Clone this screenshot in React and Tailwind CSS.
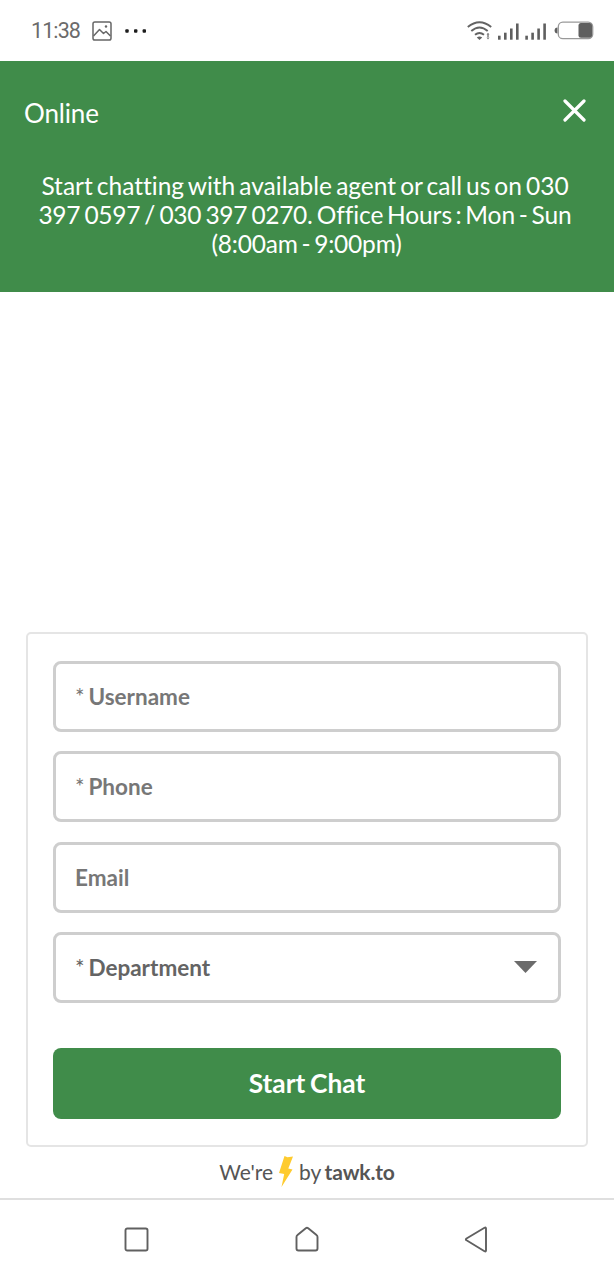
import React from "react";

function StatusBar() {
  return (
    <div className="flex h-[61px] items-center bg-white pl-[31px] pr-[20px]">
      <span className="w-[50px] pt-[1px] font-['Roboto',sans-serif] text-[21.500px] leading-none tracking-[-0.900px] text-[#6b6b6b]">11:38</span>
      <svg className="ml-[11px]" width="20" height="20" viewBox="0 0 20 20" fill="none" stroke="#666" strokeWidth="1.5">
        <rect x="1" y="1" width="18" height="18" rx="1.8" />
        <path d="M1.5 15 7.5 8.5 11.5 12.5 14 10.500 18.500 15" strokeLinejoin="round" />
        <circle cx="14" cy="5.500" r="1.200" fill="#666" stroke="none" />
      </svg>
      <svg className="ml-[13px]" width="22" height="4" viewBox="0 0 22 4" fill="#1c1c1c">
        <rect x="0.300" y="0.300" width="3.400" height="3.400" rx="0.900" />
        <rect x="9" y="0.300" width="3.400" height="3.400" rx="0.900" />
        <rect x="17.600" y="0.300" width="3.400" height="3.400" rx="0.900" />
      </svg>
      <svg className="ml-auto" width="127" height="22" viewBox="0 0 127 22" fill="none">
        <g stroke="#636363" strokeWidth="1.900">
          <path d="M.8 7Q12.500-2.500 24.200 7" />
          <path d="M4.300 11Q12.500 3.800 20.700 11" />
          <path d="M8 14.800Q12.500 11 17 14.800" />
        </g>
        <path d="M9.800 17.500Q12.500 15.500 15.200 17.500L12.500 20Z" fill="#636363" />
        <path d="M19.500 14.500 21 12.800 22.500 14.500ZM20.300 14.500H21.700V17H20.300ZM19.500 17.500H22.500L21 19.500Z" fill="#777" />
        <g fill="#5f5f5f">
          <rect x="31" y="15.700" width="2.600" height="4" />
          <rect x="37" y="12.700" width="2.600" height="7" />
          <rect x="43" y="8.500" width="2.600" height="11.200" />
          <rect x="49" y="3.500" width="2.600" height="16.200" />
          <rect x="58.300" y="15.700" width="2.600" height="4" />
          <rect x="64.300" y="12.700" width="2.600" height="7" />
          <rect x="70.300" y="8.500" width="2.600" height="11.200" />
          <rect x="76.300" y="3.500" width="2.600" height="16.200" />
          <path d="M90.500 7.500V13.500Q87.600 13.500 87.600 10.500T90.500 7.500Z" />
        </g>
        <rect x="91.300" y="2.200" width="34.400" height="16.500" rx="4.500" stroke="#999" strokeWidth="1.300" />
        <rect x="111.500" y="3" width="13.500" height="14.800" rx="2.500" fill="#5f5f5f" />
      </svg>
    </div>
  );
}

function Field({ label, required, select }) {
  return (
    <div
      className={
        "flex h-[71px] items-center rounded-[8px] border-[3px] border-[#cecece] pl-[19px] pr-[21px] text-[22.500px] leading-none font-bold " +
        (select ? "text-[#646464]" : "text-[#777777]")
      }
    >
      <span className="pt-[2px] [word-spacing:-1.900px]">
        {required && <span className="font-normal">* </span>}
        {label}
      </span>
      {select && (
        <svg className="-mt-[1px] ml-auto" width="23" height="12" viewBox="0 0 23 12" fill="#6b6b6b">
          <path d="M0 0H23L11.500 12Z" />
        </svg>
      )}
    </div>
  );
}

export default function App() {
  return (
    <div className="flex h-[1280px] w-[614px] flex-col overflow-hidden bg-white font-['Lato',sans-serif] [font-variant-ligatures:no-common-ligatures]">
      <StatusBar />
      <header className="h-[231px] bg-[#408c4a] text-white">
        <div className="flex h-[101px] items-center justify-between pl-[24px] pr-[28px]">
          <h1 className="pt-[2px] text-[26px] leading-none tracking-[-0.150px]">Online</h1>
          <svg className="-mt-[2px]" width="23" height="23" viewBox="0 0 23 23" stroke="white" strokeWidth="3.200" strokeLinecap="round">
            <path d="M2 2 21 21M21 2 2 21" />
          </svg>
        </div>
        <p className="mt-[9px] pr-[4px] text-center text-[24.500px] leading-[29px] whitespace-nowrap">
          <span className="[word-spacing:-2.200px]">Start chatting with available agent or call us on 030</span>
          <br />
          <span className="tracking-[-0.300px] [word-spacing:-1.700px]">397 0597 / 030 397 0270. </span>
          <span className="tracking-[-0.080px] [word-spacing:-2.500px]">Office Hours : Mon - Sun</span>
          <br />
          <span className="pl-[3px] tracking-[-0.200px] [word-spacing:-2.300px]">(8:00am - 9:00pm)</span>
        </p>
      </header>
      <main className="mt-auto px-[26px]">
        <div className="h-[515px] rounded-[5px] border-2 border-[#e5e5e5] px-[25px] pt-[27.200px]">
          <div className="flex flex-col gap-[19.400px]">
            <Field label="Username" required />
            <Field label="Phone" required />
            <Field label="Email" />
            <Field label="Department" required select />
          </div>
          <button className="mt-[45px] flex h-[71.500px] w-full items-center justify-center rounded-[8px] bg-[#408c4a] pb-[1px] text-[26.300px] leading-none font-bold text-white [word-spacing:-1.600px]">
            Start Chat
          </button>
        </div>
      </main>
      <footer className="flex h-[51.400px] items-center justify-center text-[21px] leading-none text-[#555]">
        <span className="-mt-[2px]">We're</span>
        <svg className="mx-[6px] -mt-[1px]" width="14" height="31" viewBox="0 0 14 31" fill="#fecb2f">
          <path d="M5.500 0 8.500 1.200 14 .5 9.300 12.500 13.500 13.500 2.500 31 5.200 18 0 17Z" />
        </svg>
        <span className="-mt-[2px] [word-spacing:-1.700px]">
          by <span className="font-bold tracking-[-0.150px]">tawk.to</span>
        </span>
      </footer>
      <nav className="flex h-[82px] items-center border-t-2 border-[#dfdfdf] pb-[2px] pl-[124px] text-[#606060]">
        <svg width="25" height="25" viewBox="0 0 25 25" fill="none" stroke="currentColor" strokeWidth="1.900">
          <rect x="1.500" y="1.500" width="22" height="22" rx="1.800" />
        </svg>
        <svg className="ml-[145px]" width="26" height="26" viewBox="0 0 26 26" fill="none" stroke="currentColor" strokeWidth="1.900" strokeLinejoin="round">
          <path d="M2.500 11Q2.500 9.700 3.500 9L11.800 2.200Q13 1.200 14.200 2.200L22.500 9Q23.500 9.700 23.500 11V22.500Q23.500 24.500 21.500 24.500H4.500Q2.500 24.500 2.500 22.500Z" />
        </svg>
        <svg className="ml-[144px]" width="24" height="27" viewBox="0 0 24 27" fill="none" stroke="currentColor" strokeWidth="1.900" strokeLinejoin="round">
          <path d="M2.500 12.500 20.500 1.800Q22 1 22 2.500V24.500Q22 26 20.500 25.200L2.500 14.300Q1.200 13.400 2.500 12.500Z" />
        </svg>
      </nav>
    </div>
  );
}
